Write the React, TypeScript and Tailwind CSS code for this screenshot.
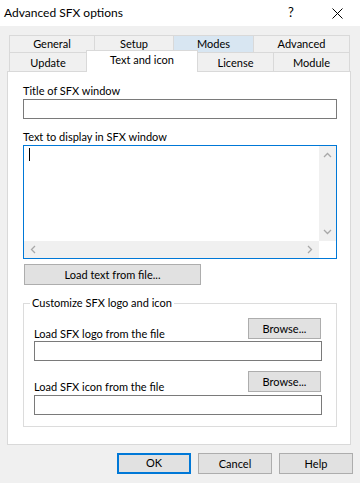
import React from "react";

function Chevron({ dir }: { dir: "up" | "down" | "left" | "right" }) {
  const vertical = dir === "up" || dir === "down";
  const w = vertical ? 9 : 6;
  const h = vertical ? 6 : 9;
  const pts = {
    up: "1,5 4.5,1.5 8,5",
    down: "1,1 4.5,4.5 8,1",
    left: "5,1 1.5,4.5 5,8",
    right: "1,1 4.5,4.5 1,8",
  }[dir];
  return (
    <svg width={w} height={h} viewBox={`0 0 ${w} ${h}`}>
      <polyline points={pts} fill="none" stroke="#a8a8a8" strokeWidth="1.3" />
    </svg>
  );
}

function Btn({ children, className = "" }: { children: React.ReactNode; className?: string }) {
  return (
    <div
      className={
        "flex items-center justify-center bg-[#e1e1e1] border border-[#adadad] h-[21px] leading-none " +
        className
      }
    >
      {children}
    </div>
  );
}

export default function App() {
  return (
    <div className="w-[360px] h-[483px] bg-[#f0f0f0] flex flex-col overflow-hidden text-[11px] text-black font-[Lato,'Liberation_Sans',sans-serif]">
      {/* Title bar */}
      <div className="h-[26px] bg-white flex items-center shrink-0">
        <span className="pl-[4px] text-[12px]">Advanced SFX options</span>
        <div className="ml-auto flex h-full">
          <div className="w-[46px] flex items-center justify-center text-[13px]">?</div>
          <div className="w-[46px] flex items-center justify-center">
            <svg width="11" height="11" viewBox="0 0 11 11">
              <path d="M0.5 0.5 L10.5 10.5 M10.5 0.5 L0.5 10.5" stroke="#000" strokeWidth="1" />
            </svg>
          </div>
        </div>
      </div>

      {/* Tabs */}
      <div className="mt-[9px] pl-[9px] flex flex-col">
        <div className="flex h-[17px]">
          <div className="w-[85px] border-t border-l border-[#d9d9d9] flex items-center justify-center">General</div>
          <div className="w-[79px] border-t border-l border-[#d9d9d9] flex items-center justify-center">Setup</div>
          <div className="w-[80px] border-t border-l border-[#d9d9d9] bg-[#d8e6f2] flex items-center justify-center">Modes</div>
          <div className="w-[97px] border-t border-x border-[#d9d9d9] flex items-center justify-center">Advanced</div>
        </div>
        <div className="flex h-[19px] items-start">
          <div className="w-[77px] h-[19px] border-t border-l border-[#d9d9d9] flex items-center justify-center pt-[3px]">Update</div>
          <div className="relative z-10 w-[112px] h-[22px] mt-[-2px] bg-white border-t border-x border-[#d9d9d9] flex items-center justify-center pb-[2px]">
            Text and icon
          </div>
          <div className="w-[75px] h-[19px] border-t border-[#d9d9d9] flex items-center justify-center pt-[3px]">License</div>
          <div className="w-[77px] h-[19px] border-t border-x border-[#d9d9d9] flex items-center justify-center pt-[3px]">Module</div>
        </div>
      </div>

      {/* Panel */}
      <div className="ml-[7px] w-[344px] h-[374px] shrink-0 bg-white border border-[#d9d9d9] flex flex-col pl-[15px] pr-[13px]">
        <div className="mt-[12px] h-[14px] leading-[14px]">Title of SFX window</div>
        <div className="mt-[1px] h-[20px] border border-[#7a7a7a] bg-white" />
        <div className="mt-[11px] h-[14px] leading-[14px]">Text to display in SFX window</div>
        <div className="mt-[1px] h-[114px] border border-[#0078d7] bg-white flex flex-col">
          <div className="flex flex-1">
            <div className="flex-1 pl-[5px] pt-[2px]">
              <div className="w-px h-[13px] bg-black" />
            </div>
            <div className="w-[17px] bg-[#f0f0f0] flex flex-col items-center justify-between pt-[6px] pb-[6px]">
              <Chevron dir="up" />
              <Chevron dir="down" />
            </div>
          </div>
          <div className="flex h-[17px]">
            <div className="flex-1 bg-[#f0f0f0] flex items-center justify-between pl-[6px] pr-[6px]">
              <Chevron dir="left" />
              <Chevron dir="right" />
            </div>
            <div className="w-[17px] bg-white" />
          </div>
        </div>
        <Btn className="mt-[5px] ml-[1px] w-[177px]">Load text from file...</Btn>

        <div className="relative mt-[18px] h-[124px] border border-[#dcdcdc] flex flex-col pl-[10px] pr-[14px]">
          <span className="absolute left-[6px] top-[-8px] bg-white px-[2px] leading-[14px]">Customize SFX logo and icon</span>
          <div className="mt-[14px] h-[21px] flex items-end justify-between">
            <span className="leading-[14px] mb-[-2px]">Load SFX logo from the file</span>
            <Btn className="w-[73px] mr-[1px]">Browse...</Btn>
          </div>
          <div className="mt-[2px] h-[20px] border border-[#7a7a7a] bg-white" />
          <div className="mt-[10px] h-[21px] flex items-end justify-between">
            <span className="leading-[14px] mb-[-2px]">Load SFX icon from the file</span>
            <Btn className="w-[73px] mr-[1px]">Browse...</Btn>
          </div>
          <div className="mt-[3px] h-[20px] border border-[#7a7a7a] bg-white" />
        </div>
      </div>

      {/* Footer */}
      <div className="mt-[8px] flex justify-end pr-[7px] gap-[7px]">
        <div className="w-[74px] h-[21px] flex items-center justify-center bg-[#e1e1e1] border-2 border-[#0078d7]">OK</div>
        <Btn className="w-[74px]">Cancel</Btn>
        <Btn className="w-[74px]">Help</Btn>
      </div>
    </div>
  );
}
